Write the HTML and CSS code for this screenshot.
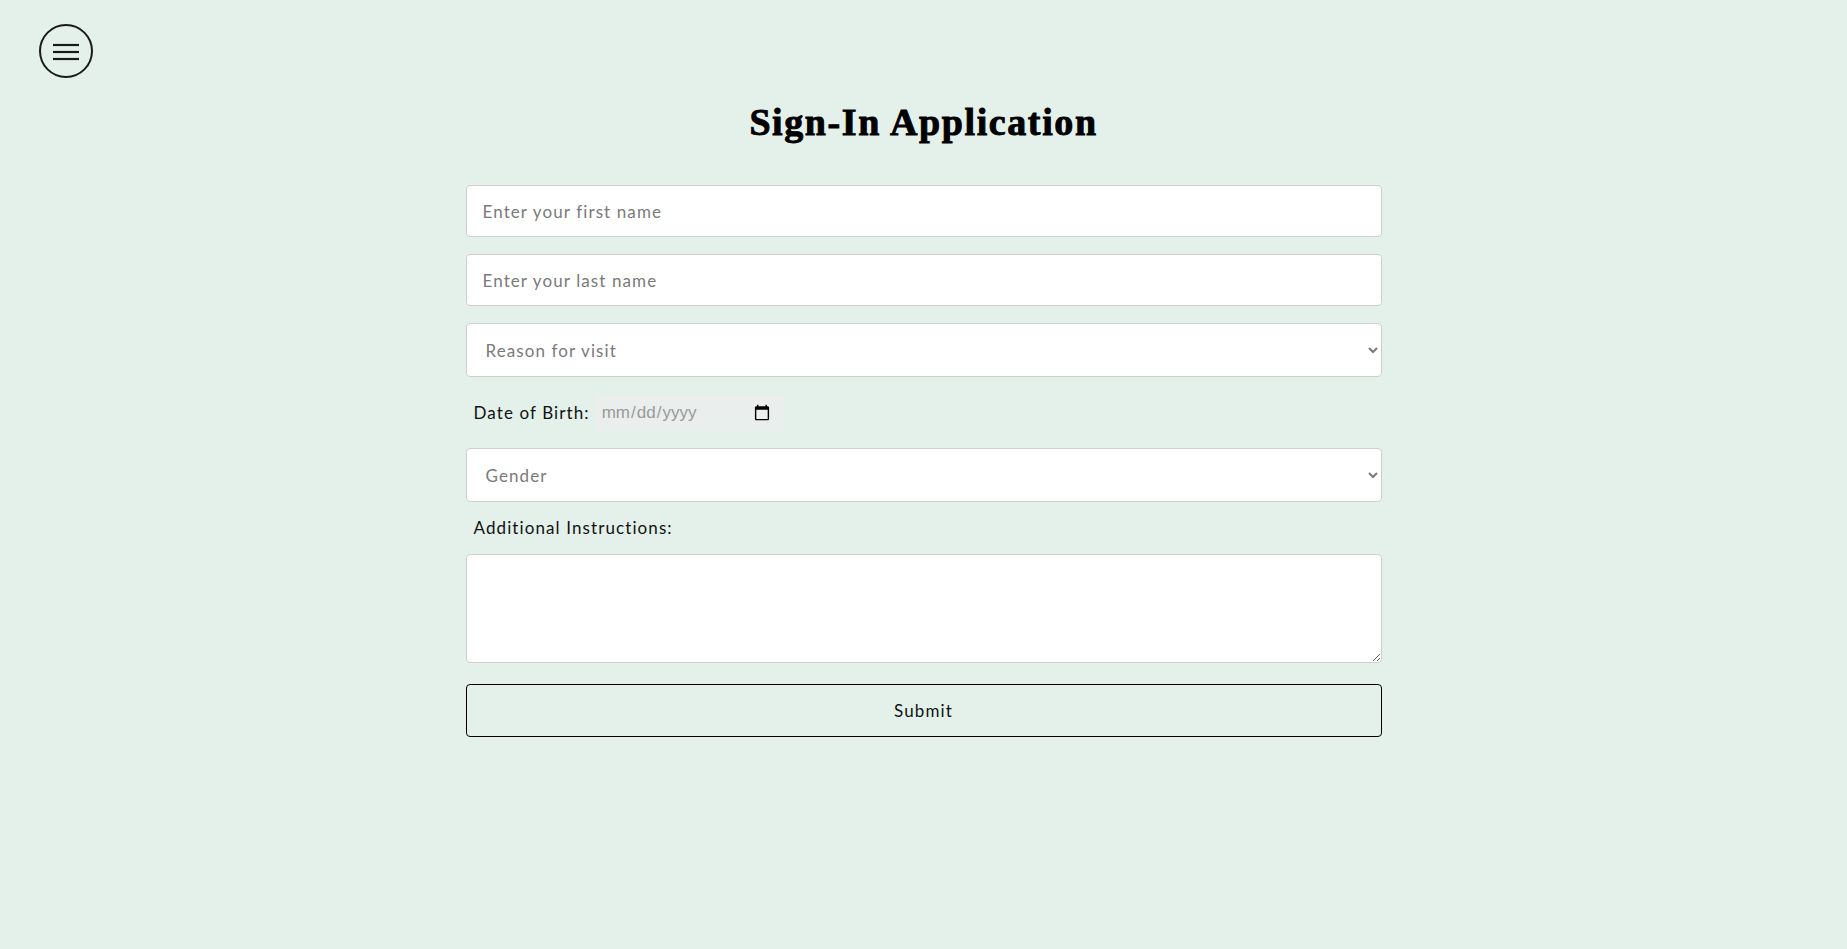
FILE: index.html
```html
<!DOCTYPE html>
<html lang="en">
<head>
<meta charset="utf-8">
<title>Sign-In Application</title>
<link rel="stylesheet" href="styles.css">
</head>
<body>
<header class="topbar">
  <button class="menu-btn" type="button" aria-label="Menu">
    <svg width="28" height="18" viewBox="0 0 28 18" fill="none" stroke="#1a1a1a" stroke-width="2.2">
      <line x1="1" y1="2" x2="27" y2="2"/>
      <line x1="1" y1="9" x2="27" y2="9"/>
      <line x1="1" y1="16" x2="27" y2="16"/>
    </svg>
  </button>
</header>
<main class="main">
  <h1 class="title">Sign-In Application</h1>
  <form class="form">
    <input class="field" type="text" placeholder="Enter your first name">
    <input class="field" type="text" placeholder="Enter your last name">
    <select class="field select">
      <option>Reason for visit</option>
    </select>
    <div class="dob">
      <label class="label" for="dob">Date of Birth:</label>
      <input class="date" id="dob" type="date">
    </div>
    <select class="field select">
      <option>Gender</option>
    </select>
    <label class="label instr" for="notes">Additional Instructions:</label>
    <textarea class="field notes" id="notes"></textarea>
    <button class="submit" type="button">Submit</button>
  </form>
</main>
</body>
</html>
```
FILE: styles.css
```css
* { box-sizing: border-box; }
html, body { margin: 0; padding: 0; }
body {
  background: #e4f1eb;
  font-family: Lato, "Open Sans", sans-serif;
  color: #111;
  min-height: 949px;
}
.topbar {
  padding: 24px 0 0 39px;
  height: 80px;
}
.menu-btn {
  width: 54px;
  height: 54px;
  border-radius: 50%;
  border: 2px solid #1a1a1a;
  background: transparent;
  display: flex;
  align-items: center;
  justify-content: center;
  padding: 0;
  padding-top: 1px;
}
.main {
  width: 916px;
  margin: 0 auto;
}
.title {
  font-family: "Liberation Serif", "DejaVu Serif", serif;
  font-weight: 700;
  font-size: 38px;
  letter-spacing: 1.6px;
  -webkit-text-stroke: 0.9px #000;
  color: #000;
  text-align: center;
  margin: 20px 0 0;
  line-height: 44px;
  height: 44px;
}
.form {
  margin-top: 41px;
  display: flex;
  flex-direction: column;
  gap: 17px;
}
.field {
  width: 100%;
  height: 52px;
  border: 1px solid #cfcfcf;
  border-radius: 4px;
  background: #fff;
  font-family: Lato, "Open Sans", sans-serif;
  font-size: 17px;
  font-weight: 400;
  letter-spacing: 1.1px;
  padding: 0 16px;
  color: #111;
  margin: 0;
}
.field::placeholder { color: #7a7a7a; }
.select {
  height: 54px;
  padding: 0 15px;
  color: #7a7a7a;
}
.dob {
  display: flex;
  align-items: center;
  height: 37px;
  padding-left: 8px;
  gap: 5px;
}
.label {
  font-size: 17px;
  letter-spacing: 1.1px;
  color: #111;
}
.date {
  width: 190px;
  height: 37px;
  border: none;
  border-radius: 4px;
  background: #eaeeec;
  font-family: "Liberation Sans", Arial, sans-serif;
  font-size: 17px;
  color: #9a9a9a;
  padding: 0 8px 0 6px;
}
.date::-webkit-calendar-picker-indicator {
  width: 18px;
  height: 18px;
  margin-right: 4px;
}
.instr {
  padding-left: 8px;
  line-height: 18px;
  height: 18px;
}
.notes {
  height: 109px;
  resize: vertical;
  padding: 10px 16px;
  display: block;
}
.submit {
  margin-top: 4px;
  width: 100%;
  height: 53px;
  border: 1px solid #000;
  border-radius: 4px;
  background: transparent;
  font-family: Lato, "Open Sans", sans-serif;
  font-size: 17px;
  letter-spacing: 1.1px;
  color: #111;
}
```
